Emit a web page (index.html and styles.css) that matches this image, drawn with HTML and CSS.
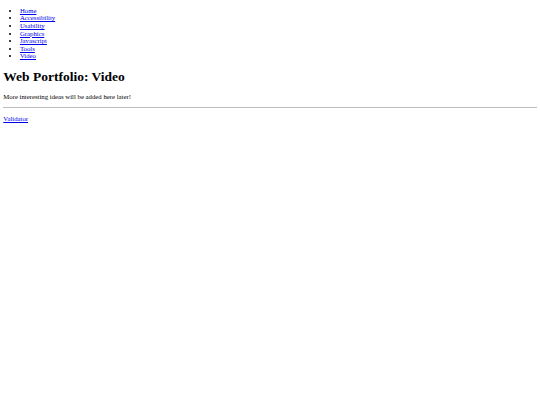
FILE: index.html
```html
<!DOCTYPE html>
<html>
<head>
<meta charset="utf-8">
<title>Web Portfolio: Video</title>
<link rel="stylesheet" href="styles.css">
</head>
<body class="page">
<ul class="nav">
<li><a href="#">Home</a></li>
<li><a href="#">Accessibility</a></li>
<li><a href="#">Usability</a></li>
<li><a href="#">Graphics</a></li>
<li><a href="#">Javascript</a></li>
<li><a href="#">Tools</a></li>
<li><a href="#">Video</a></li>
</ul>
<h1 class="title">Web Portfolio: Video</h1>
<p class="text">More interesting ideas will be added here later!</p>
<hr class="rule">
<p class="text"><a href="#">Validator</a></p>
</body>
</html>
```
FILE: styles.css
```css
.page {
  margin: 3.3px;
  font-family: "Liberation Serif", "Times New Roman", serif;
  font-size: 6.75px;
  line-height: 7.55px;
  color: #000;
  background: #fff;
}
.page a {
  color: #0000ee;
  text-decoration: underline;
}
.nav {
  margin: 3.6px 0 6.64px;
  padding-left: 16.6px;
  list-style: disc;
}
.title {
  font-size: 13.5px;
  line-height: 15.3px;
  font-weight: bold;
  margin: 8.9px 0;
}
.text {
  margin: 6.64px 0;
}
.rule {
  margin: 6.64px 0 6.2px;
  border: none;
  border-top: 1px solid #bdbdbd;
  height: 0;
}
```
